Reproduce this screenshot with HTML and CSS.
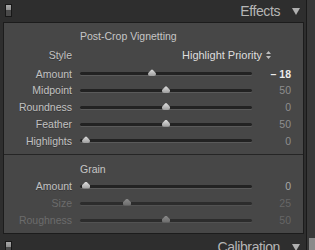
FILE: index.html
```html
<!DOCTYPE html>
<html>
<head>
<meta charset="utf-8">
<link rel="stylesheet" href="styles.css">
</head>
<body>
<div class="app">
  <div class="main">
    <div class="hdr">
      <span class="sw"></span>
      <span class="htitle">Effects</span>
      <span class="tri"></span>
    </div>
    <div class="panel">
      <section class="sec vig">
        <div class="row title"><span></span><span class="stitle">Post-Crop Vignetting</span></div>
        <div class="row style"><span class="lbl">Style</span><span class="sel">Highlight Priority<svg class="updown" width="5" height="8" viewBox="0 0 5 8"><path d="M2.5 0 L5 3 L0 3 Z M2.5 8 L5 5 L0 5 Z" fill="#bdbdbd"/></svg></span></div>
        <div class="row sl"><span class="lbl">Amount</span><span class="track"><span class="thumb" style="left:68px"></span></span><span class="val hi">– 18</span></div>
        <div class="row sl"><span class="lbl">Midpoint</span><span class="track"><span class="thumb" style="left:82px"></span></span><span class="val">50</span></div>
        <div class="row sl"><span class="lbl">Roundness</span><span class="track"><span class="thumb" style="left:82px"></span></span><span class="val">0</span></div>
        <div class="row sl"><span class="lbl">Feather</span><span class="track"><span class="thumb" style="left:82px"></span></span><span class="val">50</span></div>
        <div class="row sl"><span class="lbl">Highlights</span><span class="track"><span class="thumb" style="left:2px"></span></span><span class="val">0</span></div>
      </section>
      <div class="divider"></div>
      <section class="sec grain">
        <div class="row title"><span></span><span class="stitle">Grain</span></div>
        <div class="row sl g"><span class="lbl">Amount</span><span class="track"><span class="thumb" style="left:2px"></span></span><span class="val mid">0</span></div>
        <div class="row sl g dim"><span class="lbl">Size</span><span class="track"><span class="thumb" style="left:43px"></span></span><span class="val">25</span></div>
        <div class="row sl g dim"><span class="lbl">Roughness</span><span class="track"><span class="thumb" style="left:82px"></span></span><span class="val">50</span></div>
      </section>
    </div>
    <div class="hdr bottom">
      <span class="sw"></span>
      <span class="htitle">Calibration</span>
      <span class="tri"></span>
    </div>
  </div>
  <div class="scroll"><div class="sthumb"></div></div>
</div>
</body>
</html>
```
FILE: styles.css
```css
html, body {
  margin: 0;
  padding: 0;
  background: #2e2e2e;
  overflow: hidden;
}
body {
  font-family: "Liberation Sans", Arial, sans-serif;
  font-size: 10.5px;
  color: #c4c4c4;
}
.app {
  display: flex;
  width: 315px;
  height: 250px;
  overflow: hidden;
}
.main {
  width: 306px;
  display: flex;
  flex-direction: column;
}
.hdr {
  height: 22px;
  flex: none;
  display: flex;
  align-items: center;
  padding-right: 6px;
}
.bottom {
  margin-top: 2px;
}
.sw {
  align-self: flex-start;
  margin: 4px 0 0 5px;
  width: 5px;
  height: 11px;
  border: 1px solid #181818;
  background: linear-gradient(#a8a8a8 0, #8c8c8c 50%, #4a4a4a 50%, #4a4a4a 100%);
}
.bottom .sw {
  margin-top: 5px;
}
.htitle {
  margin-left: auto;
  font-size: 14px;
  line-height: 22px;
  letter-spacing: -0.4px;
  color: #b6b6b6;
}
.tri {
  margin-left: 12px;
  width: 0;
  height: 0;
  border-left: 4px solid transparent;
  border-right: 4px solid transparent;
  border-top: 7px solid #b0b0b0;
  margin-top: 1px;
}
.panel {
  margin-left: 3px;
  width: 299px;
  border: 1px solid #1c1c1c;
  background: #474747;
  flex: none;
}
.vig {
  padding: 5px 0 4.75px;
}
.grain {
  padding: 5.5px 0 4.5px;
}
.divider {
  height: 1px;
  background: #252525;
}
.row {
  display: grid;
  grid-template-columns: 68px 172px 31px;
  column-gap: 8px;
  align-items: center;
  height: 16.75px;
  line-height: 16.75px;
}
.row.title, .row.style, .row.g {
  height: 17px;
  line-height: 17px;
}
.row.style {
  margin: 1.5px 0 2px;
}
.stitle {
  color: #c6c6c6;
  white-space: nowrap;
}
.lbl {
  text-align: right;
  color: #c2c2c2;
  text-shadow: 0 1px 0 rgba(0,0,0,0.25);
}
.sel {
  grid-column: 2 / 4;
  padding-left: 102px;
  white-space: nowrap;
  font-size: 11px;
  color: #dedede;
  display: flex;
  align-items: center;
}
.updown {
  flex: none;
  margin-left: 4px;
}
.track {
  position: relative;
  height: 3px;
  border-radius: 2px;
  background: #222;
  box-shadow: 0 1px 0 #5a5a5a;
}
.thumb {
  position: absolute;
  top: -3px;
  width: 8px;
  height: 7px;
  background: linear-gradient(#e0e0e0, #9c9c9c);
  clip-path: polygon(50% 0, 62% 10%, 100% 55%, 100% 100%, 0 100%, 0 55%, 38% 10%);
  border-radius: 0 0 2px 2px;
}
.val {
  text-align: right;
  color: #8e8e8e;
}
.val.hi {
  color: #ececec;
  font-weight: bold;
}
.val.mid {
  color: #a8a8a8;
}
.dim .lbl {
  color: #6c6c6c;
  text-shadow: none;
}
.dim .val {
  color: #666;
}
.dim .track {
  background: #2c2c2c;
  box-shadow: 0 1px 0 #525252;
}
.dim .thumb {
  background: linear-gradient(#8a8a8a, #6a6a6a);
}
.scroll {
  width: 8px;
  border-left: 1px solid #1a1a1a;
  background: #383838;
  display: flex;
  flex-direction: column;
}
.sthumb {
  margin-top: auto;
  height: 12px;
  margin-left: 2px;
  background: #8a8a8a;
}
```
